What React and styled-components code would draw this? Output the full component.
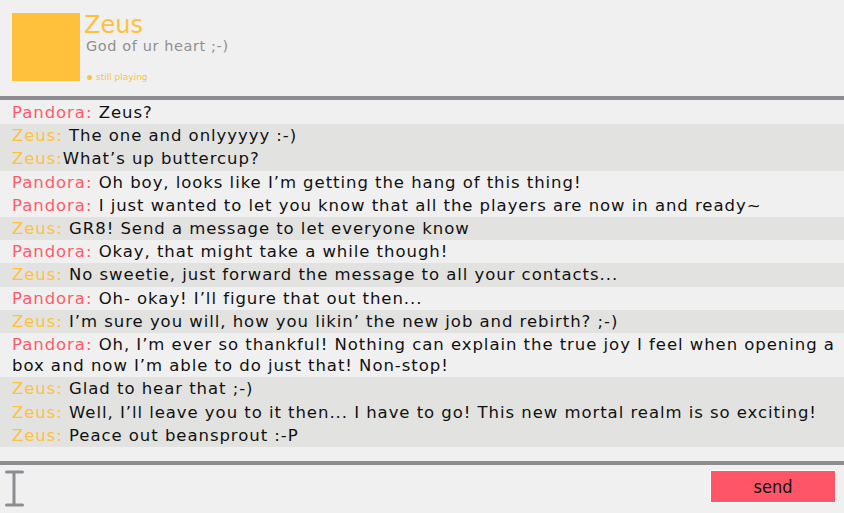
import React from "react";
import styled, { createGlobalStyle } from "styled-components";

const Global = createGlobalStyle`
  html, body { margin: 0; padding: 0; background: #f0f0f0; }
  body { font-family: "DejaVu Sans", Verdana, sans-serif; }
`;

const Page = styled.div`
  width: 844px;
  height: 513px;
  display: flex;
  flex-direction: column;
  background: #f0f0f0;
  overflow: hidden;
`;

const Header = styled.header`
  height: 96px;
  flex: none;
  box-sizing: border-box;
  padding: 13px 12px 0 12px;
  display: flex;
  gap: 4px;
`;

const Avatar = styled.div`
  width: 68px;
  height: 68px;
  background: #ffc13c;
  flex: none;
`;

const Info = styled.div`
  display: flex;
  flex-direction: column;
`;

const Name = styled.div`
  font-size: 24px;
  line-height: 24px;
  color: #ffc13c;
`;

const Tagline = styled.div`
  font-size: 14.5px;
  line-height: 18px;
  letter-spacing: 0.6px;
  color: #8f8f8f;
  padding-left: 2px;
`;

const Status = styled.div`
  margin-top: 17px;
  font-size: 9px;
  line-height: 11px;
  color: #ffc13c;
  padding-left: 3px;
  display: flex;
  align-items: center;
  gap: 4px;
`;

const Dot = styled.span`
  width: 5px;
  height: 5px;
  border-radius: 50%;
  background: #ffc13c;
  flex: none;
`;

const Divider = styled.div`
  height: 4px;
  background: #8e8c90;
  flex: none;
`;

const Chat = styled.div`
  flex: 1;
  padding-top: 1px;
  display: flex;
  flex-direction: column;
`;

const Row = styled.div`
  padding: 1px 2px 1px 12px;
  font-size: 16.5px;
  line-height: 21.2px;
  letter-spacing: 0.95px;
  color: #111;
  background: ${(p) => (p.$zeus ? "#e2e2e0" : "#f0f0f0")};
`;

const Who = styled.span`
  color: ${(p) => (p.$zeus ? "#ffc13c" : "#ff5a6a")};
`;

const Footer = styled.footer`
  height: 48px;
  flex: none;
  box-sizing: border-box;
  display: flex;
  align-items: flex-start;
  justify-content: space-between;
  padding: 5px 8px 0 3px;
`;

const Cursor = styled.svg`
  width: 22px;
  height: 37px;
  display: block;
`;

const Send = styled.button`
  width: 126px;
  height: 33px;
  border: 1px solid #fff;
  background: #ff5566;
  color: #111;
  font-family: "DejaVu Sans Condensed", "DejaVu Sans", sans-serif;
  font-size: 18px;
  padding: 0;
`;

const messages = [
  ["Pandora", "Zeus?"],
  ["Zeus", "The one and onlyyyyy :-)"],
  ["Zeus", "What’s up buttercup?", true],
  ["Pandora", "Oh boy, looks like I’m getting the hang of this thing!"],
  ["Pandora", "I just wanted to let you know that all the players are now in and ready~"],
  ["Zeus", "GR8! Send a message to let everyone know"],
  ["Pandora", "Okay, that might take a while though!"],
  ["Zeus", "No sweetie, just forward the message to all your contacts..."],
  ["Pandora", "Oh- okay! I’ll figure that out then..."],
  ["Zeus", "I’m sure you will, how you likin’ the new job and rebirth? ;-)"],
  ["Pandora", "Oh, I’m ever so thankful! Nothing can explain the true joy I feel when opening a box and now I’m able to do just that! Non-stop!"],
  ["Zeus", "Glad to hear that ;-)"],
  ["Zeus", "Well, I’ll leave you to it then... I have to go! This new mortal realm is so exciting!"],
  ["Zeus", "Peace out beansprout :-P"],
];

export default function App() {
  return (
    <Page>
      <Global />
      <Header>
        <Avatar />
        <Info>
          <Name>Zeus</Name>
          <Tagline>God of ur heart ;-)</Tagline>
          <Status>
            <Dot />
            still playing
          </Status>
        </Info>
      </Header>
      <Divider />
      <Chat>
        {messages.map(([who, text, tight], i) => {
          const zeus = who === "Zeus";
          return (
            <Row key={i} $zeus={zeus}>
              <Who $zeus={zeus}>{who}:</Who>
              {tight ? "" : " "}
              {text}
            </Row>
          );
        })}
      </Chat>
      <Divider />
      <Footer>
        <Cursor viewBox="0 0 22 37">
          <path
            d="M3.5 2 H19.5 M11 2 V35 M3.5 35 H19.5"
            stroke="#8e8c90"
            strokeWidth="3"
            strokeLinecap="round"
            fill="none"
          />
        </Cursor>
        <Send>send</Send>
      </Footer>
    </Page>
  );
}
